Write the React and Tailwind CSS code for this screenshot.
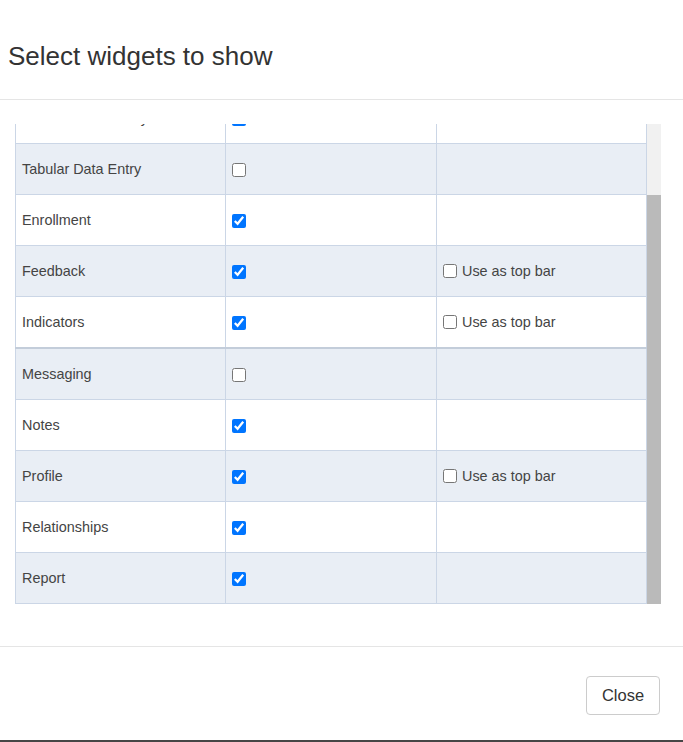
import React from 'react';

const rows = [
  { name: 'Timeline Data Entry', checked: true, topBar: false },
  { name: 'Tabular Data Entry', checked: false, topBar: false },
  { name: 'Enrollment', checked: true, topBar: false },
  { name: 'Feedback', checked: true, topBar: true },
  { name: 'Indicators', checked: true, topBar: true, divider: true },
  { name: 'Messaging', checked: false, topBar: false },
  { name: 'Notes', checked: true, topBar: false },
  { name: 'Profile', checked: true, topBar: true },
  { name: 'Relationships', checked: true, topBar: false },
  { name: 'Report', checked: true, topBar: false },
];

const WidgetRow = ({ row, striped }) => {
  const bg = striped ? 'bg-[#e9eef5]' : 'bg-white';
  const bottom = row.divider ? 'h-[52px] border-b-2 border-b-[#c3cdda]' : 'h-[51px] border-b border-b-[#cbd6e6]';
  return (
    <div className={`flex shrink-0 ${bg} ${bottom}`}>
      <div className="w-[210px] flex items-center border-l border-[#cbd6e6] px-[6px] pt-[1px] text-[14.4px] text-[#444]">
        {row.name}
      </div>
      <div className="w-[211px] flex items-center border-l border-[#cbd6e6] px-[6px] pt-[1px]">
        <input type="checkbox" defaultChecked={row.checked} className="m-0 w-[14px] h-[14px]" />
      </div>
      <div className="w-[211px] flex items-center border-l border-r border-[#cbd6e6] px-[6px] pt-[1px]">
        {row.topBar && (
          <label className="flex items-center gap-[5px] text-[14.4px] text-[#444]">
            <input type="checkbox" className="m-0 w-[14px] h-[14px]" />
            Use as top bar
          </label>
        )}
      </div>
    </div>
  );
};

const App = () => {
  return (
    <div className="w-[683px] h-[742px] flex flex-col bg-white overflow-hidden" style={{ fontFamily: '"Liberation Sans", Arial, sans-serif' }}>
      <header className="h-[100px] shrink-0 flex items-center pl-[8px] pt-[12px] border-b border-[#e5e5e5]">
        <h1 className="text-[26px] leading-[30px] text-[#333]">Select widgets to show</h1>
      </header>

      {/* scrolled to the bottom: top rows are clipped */}
      <div className="pt-[24px] pb-[42px] pl-[15px] flex">
        <div className="h-[480px] w-[632px] flex flex-col justify-end overflow-hidden">
          {rows.map((row, i) => (
            <WidgetRow key={row.name} row={row} striped={i % 2 === 1} />
          ))}
        </div>
        <div className="w-[14px] h-[480px] flex flex-col bg-[#f1f1f1]">
          <div className="h-[71px]" />
          <div className="flex-1 bg-[#bababa]" />
        </div>
      </div>

      <footer className="flex-1 flex justify-end items-start pt-[29px] pr-[23px] border-t border-[#e5e5e5]">
        <button className="h-[39px] w-[74px] border border-[#ccc] rounded-[4px] bg-white text-[16.5px] text-[#333]">
          Close
        </button>
      </footer>
      <div className="h-[2px] shrink-0 bg-[#464646]" />
    </div>
  );
};

export default App;
